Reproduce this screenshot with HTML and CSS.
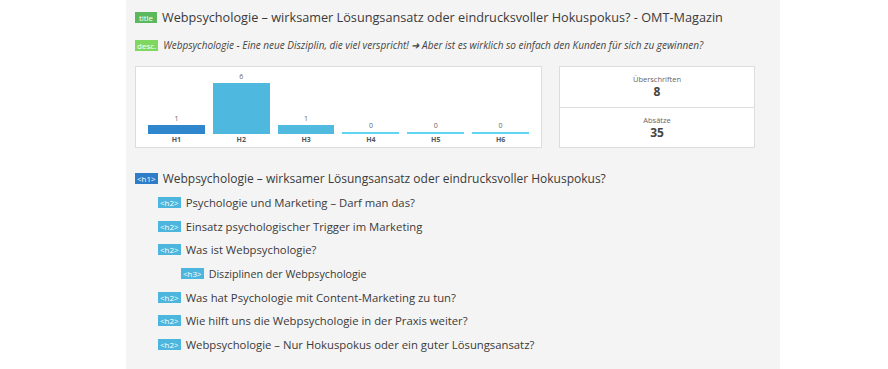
FILE: index.html
```html
<!DOCTYPE html>
<html lang="de">
<head>
  <meta charset="UTF-8">
  <title>SEO Übersicht</title>
  <link rel="stylesheet" href="styles.css">
</head>
<body>
  <div class="panel">
    <div class="meta-row meta-title">
      <span class="tag tag-title">title</span>
      <span class="meta-text">Webpsychologie – wirksamer Lösungsansatz oder eindrucksvoller Hokuspokus? - OMT-Magazin</span>
    </div>
    <div class="meta-row meta-desc">
      <span class="tag tag-desc">desc.</span>
      <span class="meta-text">Webpsychologie - Eine neue Disziplin, die viel verspricht! ➜ Aber ist es wirklich so einfach den Kunden für sich zu gewinnen?</span>
    </div>

    <div class="stats">
      <div class="chart">
        <div class="bar-col">
          <span class="bar-val">1</span>
          <div class="bar bar-h1" style="height: 9px"></div>
          <span class="bar-label">H1</span>
        </div>
        <div class="bar-col">
          <span class="bar-val">6</span>
          <div class="bar bar-h2" style="height: 51px"></div>
          <span class="bar-label">H2</span>
        </div>
        <div class="bar-col">
          <span class="bar-val">1</span>
          <div class="bar bar-h3" style="height: 9px"></div>
          <span class="bar-label">H3</span>
        </div>
        <div class="bar-col">
          <span class="bar-val">0</span>
          <div class="bar bar-empty" style="height: 2px"></div>
          <span class="bar-label">H4</span>
        </div>
        <div class="bar-col">
          <span class="bar-val">0</span>
          <div class="bar bar-empty" style="height: 2px"></div>
          <span class="bar-label">H5</span>
        </div>
        <div class="bar-col">
          <span class="bar-val">0</span>
          <div class="bar bar-empty" style="height: 2px"></div>
          <span class="bar-label">H6</span>
        </div>
      </div>
      <div class="counts">
        <div class="count">
          <span class="count-label">Überschriften</span>
          <span class="count-num">8</span>
        </div>
        <div class="count">
          <span class="count-label">Absätze</span>
          <span class="count-num">35</span>
        </div>
      </div>
    </div>

    <ul class="outline">
      <li class="lvl-1"><span class="tag tag-h1">&lt;h1&gt;</span>Webpsychologie – wirksamer Lösungsansatz oder eindrucksvoller Hokuspokus?</li>
      <li class="lvl-2"><span class="tag tag-h2">&lt;h2&gt;</span>Psychologie und Marketing – Darf man das?</li>
      <li class="lvl-2"><span class="tag tag-h2">&lt;h2&gt;</span>Einsatz psychologischer Trigger im Marketing</li>
      <li class="lvl-2"><span class="tag tag-h2">&lt;h2&gt;</span>Was ist Webpsychologie?</li>
      <li class="lvl-3"><span class="tag tag-h2">&lt;h3&gt;</span>Disziplinen der Webpsychologie</li>
      <li class="lvl-2"><span class="tag tag-h2">&lt;h2&gt;</span>Was hat Psychologie mit Content-Marketing zu tun?</li>
      <li class="lvl-2"><span class="tag tag-h2">&lt;h2&gt;</span>Wie hilft uns die Webpsychologie in der Praxis weiter?</li>
      <li class="lvl-2"><span class="tag tag-h2">&lt;h2&gt;</span>Webpsychologie – Nur Hokuspokus oder ein guter Lösungsansatz?</li>
    </ul>
  </div>
</body>
</html>
```

FILE: styles.css
```css
body {
  margin: 0;
  background: #fff;
  color: #444;
  font-family: "Open Sans", "Liberation Sans", sans-serif;
}
.panel {
  margin-left: 126px;
  width: 654px;
  min-height: 369px;
  background: #f4f4f4;
  padding: 8px 0 0 9px;
  box-sizing: border-box;
}
.meta-row {
  display: flex;
  align-items: center;
  white-space: nowrap;
}
.meta-title {
  height: 18px;
}
.meta-title .meta-text {
  font-size: 12.7px;
  color: #3a3a3a;
}
.meta-desc {
  margin-top: 12px;
  height: 14px;
}
.meta-desc .meta-text {
  font-size: 10px;
  font-style: italic;
  color: #444;
}
.tag {
  display: inline-block;
  color: #fff;
  font-size: 8px;
  line-height: 11px;
  padding: 0 2px;
  margin-right: 5px;
  min-width: 18px;
  text-align: center;
}
.tag-title { background: #5cb85c; }
.tag-desc { background: #7ed860; }
.tag-h1 { background: #2d7dc8; }
.tag-h2 { background: #4cb6de; }

.stats {
  display: flex;
  align-items: flex-start;
  margin-top: 14px;
}
.chart {
  width: 407px;
  height: 82px;
  box-sizing: border-box;
  background: #fff;
  border: 1px solid #ddd;
  padding: 0 12px 2px 12px;
  display: flex;
  align-items: flex-end;
  gap: 8px;
}
.bar-col {
  width: 57px;
  display: flex;
  flex-direction: column;
  align-items: stretch;
  text-align: center;
}
.bar-val {
  font-size: 7px;
  color: #666;
  line-height: 10px;
  margin-bottom: 1px;
}
.bar-label {
  font-size: 7px;
  font-weight: bold;
  color: #555;
  line-height: 10px;
  margin-top: 1px;
}
.bar-h1 { background: #2f86cc; }
.bar-h2 { background: #4fb8df; }
.bar-h3 { background: #51badf; }
.bar-empty { background: #5fd4f3; }

.counts {
  margin-left: 17px;
  width: 196px;
  height: 82px;
  box-sizing: border-box;
  background: #fff;
  border: 1px solid #ddd;
  display: flex;
  flex-direction: column;
}
.count {
  flex: 1;
  display: flex;
  flex-direction: column;
  align-items: center;
  justify-content: center;
}
.count + .count {
  border-top: 1px solid #ddd;
}
.count-label {
  font-size: 7.5px;
  color: #666;
  line-height: 10px;
}
.count-num {
  font-size: 12px;
  font-weight: bold;
  color: #444;
  line-height: 15px;
}

.outline {
  list-style: none;
  margin: 19px 0 0 0;
  padding: 0;
}
.outline li {
  display: flex;
  align-items: center;
  height: 23.7px;
  font-size: 11.3px;
  color: #3a3a3a;
  white-space: nowrap;
}
.outline .lvl-1 {
  font-size: 12px;
}
.outline .lvl-2 {
  padding-left: 23px;
}
.outline .lvl-3 {
  padding-left: 46px;
  font-size: 10.7px;
}
```
